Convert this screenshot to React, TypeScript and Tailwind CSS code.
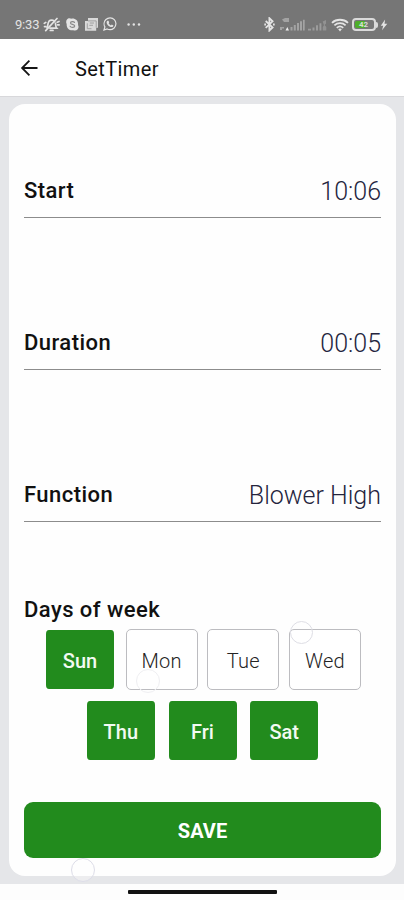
import { useState } from 'react'

const fields = [
  { label: 'Start', value: '10:06' },
  { label: 'Duration', value: '00:05' },
  { label: 'Function', value: 'Blower High' },
]

const dayRows = [
  ['Sun', 'Mon', 'Tue', 'Wed'],
  ['Thu', 'Fri', 'Sat'],
]

function StatusBar() {
  return (
    <div className="flex h-[39px] shrink-0 items-start bg-[#767676] pl-[15px] pt-[16px] text-[#e4e4e4]">
      <span className="w-[28px] text-[13px] leading-[18px] tracking-[-0.2px]">9:33</span>

      {/* Muted bell */}
      <svg className="h-[17px] w-[17px]" viewBox="0 0 17 17" fill="none" stroke="currentColor" strokeWidth="1.7" strokeLinecap="round">
        <path d="M4 11.8C5.2 10.4 4.4 7 6 5.2C7.6 3.6 10.5 3.8 11.6 5.6M12.5 7.3C12.8 9.3 12.4 10.5 13.8 12.2H7M7.3 14.4H10" />
        <path d="M2.7 14.6L14 2.5M1.3 7.4L2.8 6.4M1.5 10.6H3M14.2 6.2L16 5.5M14.6 8.8H16.2" />
      </svg>

      {/* Skype */}
      <svg className="ml-[6px] mt-[2px] h-[13px] w-[13px]" viewBox="0 0 13 13">
        <path d="M1 1.6C2-.2 4.3 0 5.3.7C9.6.1 12.5 3 12 7.1C13.8 10.5 10.7 13.7 7.2 12.2C3.1 12.8.3 9.8.7 5.9C-.2 4.2.1 2.7 1 1.6Z" fill="currentColor" />
        <path d="M8.5 4.4C7.6 3.1 4.5 3.3 4.5 4.9C4.5 6.8 8.7 5.9 8.7 8C8.7 9.8 5 10 4.1 8.3" fill="none" stroke="#8a8a8a" strokeWidth="1.2" strokeLinecap="round" />
      </svg>

      {/* Stacked notes */}
      <svg className="ml-[6px] mt-[2px] h-[13px] w-[13px]" viewBox="0 0 13 13">
        <path d="M3 0H13V9.8H11.2V12.8H0V3H3Z" fill="currentColor" opacity=".9" />
        <path d="M2.9 2.9H11.2V9.6M4.8 5H9M4.3 7.3H8M2.3 5.3V10.7H6.5" fill="none" stroke="#a0a0a0" strokeWidth="1" />
      </svg>

      {/* WhatsApp */}
      <svg className="ml-[5px] mt-[1px] h-[14px] w-[14px]" viewBox="0 0 14 14">
        <path d="M1 13L1.9 9.9C.6 7.7.9 4.4 2.9 2.5C5.3.2 9.1.3 11.3 2.6C13.6 5 13.4 8.7 11.1 11C9.2 12.7 6.3 13 4.1 12Z" fill="none" stroke="currentColor" strokeWidth="1.2" />
        <path d="M4.4 3.7L5.5 3.8L6.2 5.4L5.6 6.3C6.1 7.3 6.9 8 7.9 8.4L8.8 7.6L10.4 8.5C10.2 10 8.9 10.4 7.5 9.9C5.4 9.2 3.9 7.6 3.6 5.8C3.5 4.9 3.8 4.1 4.4 3.7Z" fill="currentColor" />
      </svg>

      <svg className="ml-[10px] mt-[7px] h-[3px] w-[14px]" viewBox="0 0 14 3" fill="currentColor">
        <circle cx="1.6" cy="1.5" r="1.2" />
        <circle cx="6.8" cy="1.5" r="1.2" />
        <circle cx="12" cy="1.5" r="1.2" />
      </svg>

      {/* Bluetooth */}
      <svg className="ml-[123px] mt-[1px] h-[15px] w-[11px]" viewBox="0 0 11 15" fill="none" stroke="currentColor" strokeWidth="1.8">
        <path d="M1.7 4L8.6 10.4L5.4 13.5V1.2L8.6 4.3L1.7 10.8" />
        <path d="M.3 7.5H2M9 7.5H10.7" />
      </svg>

      {/* Signal 1 */}
      <svg className="ml-[5px] mt-[1px] h-[15px] w-[25px]" viewBox="0 0 25 15" fill="#a3a3a3">
        <path d="M2 2.5L5 1H9V5H4Z" />
        <path d="M0 10H4V11.5H2V13H0ZM10.5 10H12.5V13.5H10.5ZM13.8 8H15.8V13.5H13.8ZM17 6H19V13.5H17ZM20 4.3H22V13.5H20ZM23 2.7H24.7V13.5H23Z" />
        <path d="M5.5 13.5L7.3 10L9 13.5Z" fill="#ededed" />
      </svg>

      {/* Signal 2 */}
      <svg className="ml-[3px] mt-[3px] h-[13px] w-[19px]" viewBox="0 0 19 13" fill="#9c9c9c">
        <path d="M0 9.8H3V11.5H0ZM4.5 8.5H6.5V11.5H4.5ZM8 6.3H10V11.5H8ZM11.5 4.3H13.4V11.5H11.5Z" />
        <path d="M14.7 2.5L18 1V4.5L16.5 6L18.3 8V11.5H14.8V8L16 6.2Z" opacity=".75" />
      </svg>

      {/* Wifi */}
      <svg className="ml-[4px] mt-[2px] h-[14px] w-[18px]" viewBox="0 0 18 14" fill="none" stroke="currentColor" strokeWidth="1.8">
        <path d="M1 4.8C5.4.7 12.6.7 17 4.8M3.4 7.3C6.5 4.4 11.5 4.4 14.6 7.3M5.8 9.8C7.7 8.1 10.3 8.1 12.2 9.8" />
        <path d="M7.1 11.1Q9 9.9 10.9 11.1L9 13.4Z" fill="currentColor" stroke="none" />
      </svg>

      {/* Battery */}
      <div className="ml-[3px] mt-[2px] flex items-center">
        <div className="flex h-[13px] w-[24px] rounded-[4px] border-2 border-[#dadada] bg-[#777777] p-px">
          <div className="flex h-full w-[10px] items-center rounded-l-[2px] bg-[#4eae2a] pl-[4px]">
            <span className="text-[8px] font-bold leading-none text-[#d5dfd0]">42</span>
          </div>
        </div>
        <div className="h-[6px] w-[2px] rounded-r-sm bg-[#dadada]" />
      </div>

      <svg className="ml-[2px] mt-[3px] h-[12px] w-[8px]" viewBox="0 0 8 12" fill="currentColor">
        <path d="M5.1.5L.8 6.8H3.2L2 11.3L7.3 4.8H4.5Z" />
      </svg>
    </div>
  )
}

export default function App() {
  const [selected, setSelected] = useState(['Sun', 'Thu', 'Fri', 'Sat'])

  const toggleDay = (day: string) => {
    setSelected(prev => (prev.includes(day) ? prev.filter(d => d !== day) : [...prev, day]))
  }

  return (
    <div className="relative flex h-[900px] w-[404px] flex-col overflow-hidden bg-[#fdfdfd] font-['Roboto',sans-serif] text-[#111111]">
      <StatusBar />

      <header className="flex h-[58px] shrink-0 items-center border-b border-[#d8d8db] bg-white pl-[20px]">
        <button aria-label="Back">
          <svg className="block h-[18px] w-[19px]" viewBox="0 0 19 18" fill="none" stroke="#161616" strokeWidth="1.8">
            <path d="M17.5 9H2.5M9.4 1.7L2.1 9L9.4 16.3" />
          </svg>
        </button>
        <h1 className="ml-[36px] pt-[3px] text-[20px] font-normal leading-6 tracking-[0.4px]">SetTimer</h1>
      </header>

      <main className="h-[787px] shrink-0 bg-[#e5e6e9] pl-[9px] pr-2 pt-[7px]">
        <div className="h-[772px] rounded-[16px] bg-[#fefefe] pl-[15px] pr-[15px]">
          <div className="flex flex-col gap-[92px] pt-[54px]">
            {fields.map(field => (
              <div key={field.label} className="flex h-[60px] items-center justify-between border-b-[1.5px] border-[#8c8c8c] pt-[6px]">
                <span className="text-[22px] font-medium tracking-[0.45px]">{field.label}</span>
                <span className="pt-[3px] text-[25px] font-light text-[#24243d]">{field.value}</span>
              </div>
            ))}
          </div>

          <h2 className="mt-[74px] text-[22px] font-medium leading-[28px] tracking-[0.45px]">Days of week</h2>

          <div className="mt-[5px] flex flex-col gap-[10px]">
            {dayRows.map(row => (
              <div key={row[0]} className="flex justify-center gap-[9.7px]">
                {row.map(day => (
                  <button
                    key={day}
                    onClick={() => toggleDay(day)}
                    className={`h-[61px] w-[72px] rounded-[5px] pt-[2px] text-[20px] ${
                      selected.includes(day)
                        ? 'border border-x-2 border-transparent bg-[#228b1d] bg-clip-padding font-medium text-[#f2faf2]'
                        : 'border border-[#bcbcc0] bg-white font-light tracking-[0.3px] text-[#242424]'
                    }`}
                  >
                    {day}
                  </button>
                ))}
              </div>
            ))}
          </div>

          <button className="mt-[41px] h-[56px] w-full rounded-[9px] bg-[#228b1d] pt-[2px] text-[20px] font-bold text-white">
            SAVE
          </button>
        </div>
      </main>

      <div className="flex justify-center pt-[6px]">
        <div className="h-[4px] w-[149px] rounded-[1px] bg-[#111111]" />
      </div>

      {/* Faint touch ripples */}
      <div className="pointer-events-none absolute left-[290px] top-[621px] size-[23px] rounded-full border border-[#dedee5]" />
      <div className="pointer-events-none absolute left-[136px] top-[669px] size-[24px] rounded-full border border-[#efeff2]" />
      <div className="pointer-events-none absolute left-[71px] top-[858px] size-[24px] rounded-full border border-[#dddde8] bg-white/30" />
    </div>
  )
}
